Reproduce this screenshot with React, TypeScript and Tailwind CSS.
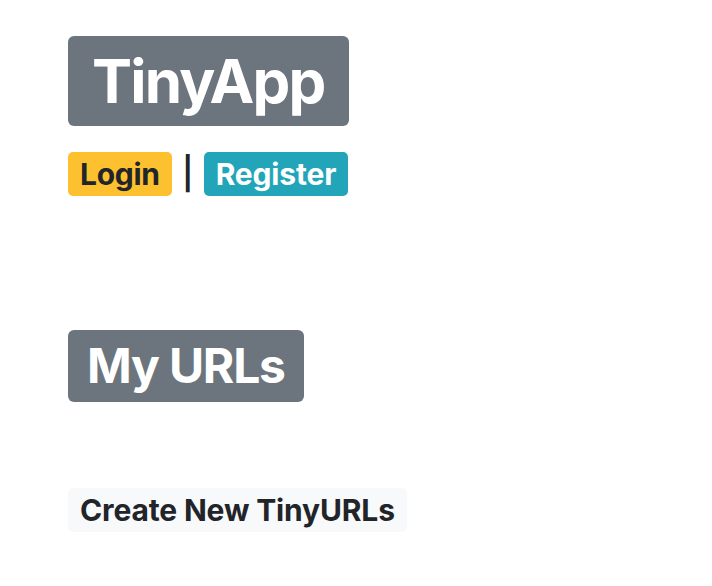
export default function App() {
  return (
    <div className="min-h-[586px] w-[712px] bg-white pl-[68px] pt-[36px] text-[#212529]" style={{ fontFamily: "Inter, 'Noto Sans', sans-serif" }}>
      <div className="flex">
        <span className="flex h-[90px] items-center rounded-[6px] bg-[#6c757d] px-[24px] text-[60px] font-bold leading-none tracking-[-0.03em] text-white">TinyApp</span>
      </div>
      <div className="mt-[26px] flex items-center">
        <span className="flex h-[44px] items-center rounded-[5px] bg-[#fdc02f] px-[12px] text-[30px] font-bold leading-none tracking-[-0.01em] text-[#212529]">Login</span>
        <span className="flex w-[32px] justify-center text-[32px] font-semibold leading-none text-[#212529]">|</span>
        <span className="flex h-[44px] items-center rounded-[5px] bg-[#22a5b8] px-[12px] text-[30px] font-bold leading-none tracking-[-0.005em] text-white">Register</span>
      </div>
      <div className="mt-[134px] flex">
        <span className="flex h-[72px] items-center rounded-[6px] bg-[#6c757d] px-[19px] text-[48px] font-bold leading-none tracking-[-0.025em] text-white">My URLs</span>
      </div>
      <div className="mt-[86px] flex">
        <span className="flex h-[44px] items-center rounded-[5px] bg-[#f8f9fa] px-[12px] text-[30px] font-bold leading-none tracking-[-0.005em] text-[#212529]">Create New TinyURLs</span>
      </div>
    </div>
  );
}
